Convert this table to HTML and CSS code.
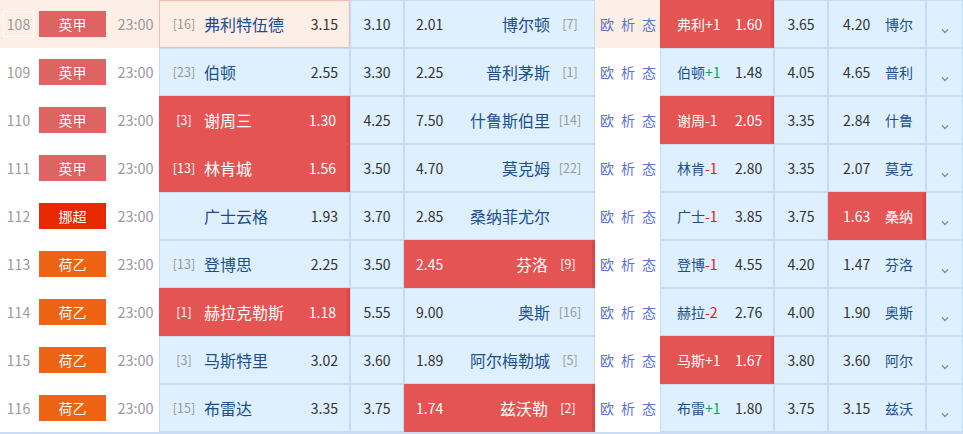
FILE: index.html
```html
<!DOCTYPE html>
<html lang="zh-CN">
<head>
<meta charset="utf-8">
<title>赛程</title>
<link rel="stylesheet" href="styles.css">
</head>
<body>
<div class="table">
  <div class="row hl">
    <div class="c-id"><span class="idbox">108</span></div>
    <div class="c-lg"><span class="badge yj">英甲</span></div>
    <div class="c-time">23:00</div>
    <div class="cell home pk"><span class="rk">[16]</span><span class="tm">弗利特伍德</span><span class="od">3.15</span></div>
    <div class="cell draw">3.10</div>
    <div class="cell away"><span class="od">2.01</span><span class="tm">博尔顿</span><span class="rk">[7]</span></div>
    <div class="links"><a>欧</a><a>析</a><a>态</a></div>
    <div class="cell hch red"><span class="hn">弗利+1</span><span class="od">1.60</span></div>
    <div class="cell hcd">3.65</div>
    <div class="cell hca"><span class="od">4.20</span><span class="hn">博尔</span></div>
    <div class="cell chev"><svg width="8" height="6" viewBox="0 0 8 6"><path d="M1 1.5 L4 4.5 L7 1.5" fill="none" stroke="#8a8a8a" stroke-width="1.4"/></svg></div>
  </div>
  <div class="row">
    <div class="c-id">109</div>
    <div class="c-lg"><span class="badge yj">英甲</span></div>
    <div class="c-time">23:00</div>
    <div class="cell home"><span class="rk">[23]</span><span class="tm">伯顿</span><span class="od">2.55</span></div>
    <div class="cell draw">3.30</div>
    <div class="cell away"><span class="od">2.25</span><span class="tm">普利茅斯</span><span class="rk">[1]</span></div>
    <div class="links"><a>欧</a><a>析</a><a>态</a></div>
    <div class="cell hch"><span class="hn">伯顿<em class="up">+1</em></span><span class="od">1.48</span></div>
    <div class="cell hcd">4.05</div>
    <div class="cell hca"><span class="od">4.65</span><span class="hn">普利</span></div>
    <div class="cell chev"><svg width="8" height="6" viewBox="0 0 8 6"><path d="M1 1.5 L4 4.5 L7 1.5" fill="none" stroke="#8a8a8a" stroke-width="1.4"/></svg></div>
  </div>
  <div class="row">
    <div class="c-id">110</div>
    <div class="c-lg"><span class="badge yj">英甲</span></div>
    <div class="c-time">23:00</div>
    <div class="cell home red"><span class="rk">[3]</span><span class="tm">谢周三</span><span class="od">1.30</span></div>
    <div class="cell draw">4.25</div>
    <div class="cell away"><span class="od">7.50</span><span class="tm">什鲁斯伯里</span><span class="rk">[14]</span></div>
    <div class="links"><a>欧</a><a>析</a><a>态</a></div>
    <div class="cell hch red"><span class="hn">谢周-1</span><span class="od">2.05</span></div>
    <div class="cell hcd">3.35</div>
    <div class="cell hca"><span class="od">2.84</span><span class="hn">什鲁</span></div>
    <div class="cell chev"><svg width="8" height="6" viewBox="0 0 8 6"><path d="M1 1.5 L4 4.5 L7 1.5" fill="none" stroke="#8a8a8a" stroke-width="1.4"/></svg></div>
  </div>
  <div class="row">
    <div class="c-id">111</div>
    <div class="c-lg"><span class="badge yj">英甲</span></div>
    <div class="c-time">23:00</div>
    <div class="cell home red"><span class="rk">[13]</span><span class="tm">林肯城</span><span class="od">1.56</span></div>
    <div class="cell draw">3.50</div>
    <div class="cell away"><span class="od">4.70</span><span class="tm">莫克姆</span><span class="rk">[22]</span></div>
    <div class="links"><a>欧</a><a>析</a><a>态</a></div>
    <div class="cell hch"><span class="hn">林肯<em class="dn">-1</em></span><span class="od">2.80</span></div>
    <div class="cell hcd">3.35</div>
    <div class="cell hca"><span class="od">2.07</span><span class="hn">莫克</span></div>
    <div class="cell chev"><svg width="8" height="6" viewBox="0 0 8 6"><path d="M1 1.5 L4 4.5 L7 1.5" fill="none" stroke="#8a8a8a" stroke-width="1.4"/></svg></div>
  </div>
  <div class="row">
    <div class="c-id">112</div>
    <div class="c-lg"><span class="badge nc">挪超</span></div>
    <div class="c-time">23:00</div>
    <div class="cell home"><span class="rk"></span><span class="tm">广士云格</span><span class="od">1.93</span></div>
    <div class="cell draw">3.70</div>
    <div class="cell away"><span class="od">2.85</span><span class="tm">桑纳菲尤尔</span><span class="rk"></span></div>
    <div class="links"><a>欧</a><a>析</a><a>态</a></div>
    <div class="cell hch"><span class="hn">广士<em class="dn">-1</em></span><span class="od">3.85</span></div>
    <div class="cell hcd">3.75</div>
    <div class="cell hca red"><span class="od">1.63</span><span class="hn">桑纳</span></div>
    <div class="cell chev"><svg width="8" height="6" viewBox="0 0 8 6"><path d="M1 1.5 L4 4.5 L7 1.5" fill="none" stroke="#8a8a8a" stroke-width="1.4"/></svg></div>
  </div>
  <div class="row">
    <div class="c-id">113</div>
    <div class="c-lg"><span class="badge hy">荷乙</span></div>
    <div class="c-time">23:00</div>
    <div class="cell home"><span class="rk">[13]</span><span class="tm">登博思</span><span class="od">2.25</span></div>
    <div class="cell draw">3.50</div>
    <div class="cell away red"><span class="od">2.45</span><span class="tm">芬洛</span><span class="rk">[9]</span></div>
    <div class="links"><a>欧</a><a>析</a><a>态</a></div>
    <div class="cell hch"><span class="hn">登博<em class="dn">-1</em></span><span class="od">4.55</span></div>
    <div class="cell hcd">4.20</div>
    <div class="cell hca"><span class="od">1.47</span><span class="hn">芬洛</span></div>
    <div class="cell chev"><svg width="8" height="6" viewBox="0 0 8 6"><path d="M1 1.5 L4 4.5 L7 1.5" fill="none" stroke="#8a8a8a" stroke-width="1.4"/></svg></div>
  </div>
  <div class="row">
    <div class="c-id">114</div>
    <div class="c-lg"><span class="badge hy">荷乙</span></div>
    <div class="c-time">23:00</div>
    <div class="cell home red"><span class="rk">[1]</span><span class="tm">赫拉克勒斯</span><span class="od">1.18</span></div>
    <div class="cell draw">5.55</div>
    <div class="cell away"><span class="od">9.00</span><span class="tm">奥斯</span><span class="rk">[16]</span></div>
    <div class="links"><a>欧</a><a>析</a><a>态</a></div>
    <div class="cell hch"><span class="hn">赫拉<em class="dn">-2</em></span><span class="od">2.76</span></div>
    <div class="cell hcd">4.00</div>
    <div class="cell hca"><span class="od">1.90</span><span class="hn">奥斯</span></div>
    <div class="cell chev"><svg width="8" height="6" viewBox="0 0 8 6"><path d="M1 1.5 L4 4.5 L7 1.5" fill="none" stroke="#8a8a8a" stroke-width="1.4"/></svg></div>
  </div>
  <div class="row">
    <div class="c-id">115</div>
    <div class="c-lg"><span class="badge hy">荷乙</span></div>
    <div class="c-time">23:00</div>
    <div class="cell home"><span class="rk">[3]</span><span class="tm">马斯特里</span><span class="od">3.02</span></div>
    <div class="cell draw">3.60</div>
    <div class="cell away"><span class="od">1.89</span><span class="tm">阿尔梅勒城</span><span class="rk">[5]</span></div>
    <div class="links"><a>欧</a><a>析</a><a>态</a></div>
    <div class="cell hch red"><span class="hn">马斯+1</span><span class="od">1.67</span></div>
    <div class="cell hcd">3.80</div>
    <div class="cell hca"><span class="od">3.60</span><span class="hn">阿尔</span></div>
    <div class="cell chev"><svg width="8" height="6" viewBox="0 0 8 6"><path d="M1 1.5 L4 4.5 L7 1.5" fill="none" stroke="#8a8a8a" stroke-width="1.4"/></svg></div>
  </div>
  <div class="row">
    <div class="c-id">116</div>
    <div class="c-lg"><span class="badge hy">荷乙</span></div>
    <div class="c-time">23:00</div>
    <div class="cell home"><span class="rk">[15]</span><span class="tm">布雷达</span><span class="od">3.35</span></div>
    <div class="cell draw">3.75</div>
    <div class="cell away red"><span class="od">1.74</span><span class="tm">兹沃勒</span><span class="rk">[2]</span></div>
    <div class="links"><a>欧</a><a>析</a><a>态</a></div>
    <div class="cell hch"><span class="hn">布雷<em class="up">+1</em></span><span class="od">1.80</span></div>
    <div class="cell hcd">3.75</div>
    <div class="cell hca"><span class="od">3.15</span><span class="hn">兹沃</span></div>
    <div class="cell chev"><svg width="8" height="6" viewBox="0 0 8 6"><path d="M1 1.5 L4 4.5 L7 1.5" fill="none" stroke="#8a8a8a" stroke-width="1.4"/></svg></div>
  </div>
</div>
</body>
</html>
```
FILE: styles.css
```css
html, body {
  margin: 0;
  padding: 0;
  background: #fff;
}
body {
  font-family: "Noto Sans CJK SC", "Microsoft YaHei", sans-serif;
  font-size: 14px;
  color: #333;
}
.table {
  width: 963px;
  border-bottom: 2px solid #c9ddf3;
}
.row {
  display: flex;
  height: 48px;
}
.row.hl > .c-id,
.row.hl > .c-lg,
.row.hl > .c-time,
.row.hl > .links {
  background: #fdeee6;
}
.c-id, .c-lg, .c-time, .links, .cell {
  box-sizing: border-box;
  height: 48px;
  display: flex;
  align-items: center;
  line-height: 20px;
}
.c-id {
  width: 37px;
  justify-content: center;
  color: #9a9a9a;
}
.idbox {
  display: flex;
  align-items: center;
  justify-content: center;
  width: 31px;
  height: 26px;
  box-sizing: border-box;
  border: 1px solid #fff;
}
.c-lg {
  width: 75px;
  padding-left: 2px;
}
.badge {
  display: flex;
  align-items: center;
  justify-content: center;
  width: 67px;
  height: 26px;
  color: #fff;
  font-size: 14px;
}
.badge.yj { background: #e06262; }
.badge.nc { background: #e82800; }
.badge.hy { background: #ee6213; }
.c-time {
  width: 47px;
  justify-content: center;
  color: #9a9a9a;
  font-size: 14.5px;
}
.cell {
  border: 1px solid #c6dcf4;
  background: #def0fd;
}
.cell.red {
  background: #e45452;
  border-color: #e45452;
  border-right: 3px solid #d94845;
  color: #fff;
}
.cell.pk {
  background: #fdeee6;
  border-color: #f8bbb5;
}
.tm {
  font-size: 16px;
  color: #1b4f8e;
}
.red .tm, .red .hn, .red .rk, .red .od { color: #fff; }
.rk {
  width: 30px;
  text-align: center;
  font-size: 12.5px;
  color: #999;
}
.home {
  width: 191px;
  padding: 0 11px 0 9px;
}
.home .tm { margin-left: 5px; }
.home .od { margin-left: auto; }
.draw, .hcd {
  width: 54px;
  justify-content: center;
}
.away {
  width: 191px;
  padding: 0 9px 0 11px;
}
.away .tm { margin-left: auto; margin-right: 5px; }
.links {
  width: 65px;
  padding-left: 5px;
  gap: 7px;
}
.links a {
  color: #5b72d6;
  font-size: 14px;
}
.hch {
  width: 114px;
  padding-left: 16px;
}
.hn {
  color: #1b4f8e;
  font-size: 14px;
}
.hch .hn { width: 58px; }
.hn em { font-style: normal; }
.hn .up { color: #17a33c; }
.hn .dn { color: #e8141a; }
.hca {
  width: 98px;
  padding-left: 14px;
}
.hca .od { width: 42px; }
.chev {
  width: 37px;
  justify-content: center;
  align-items: flex-start;
  padding-top: 27px;
}
.chev svg { display: block; }
```
